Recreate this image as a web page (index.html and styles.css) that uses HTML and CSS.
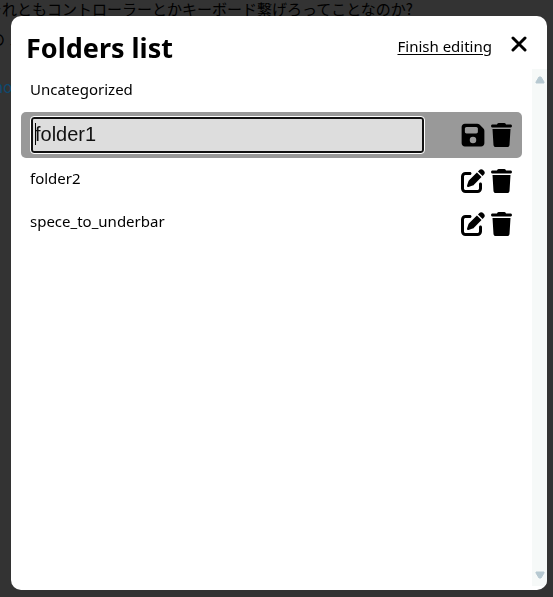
FILE: index.html
```html
<!DOCTYPE html>
<html lang="en">
<head>
<meta charset="utf-8">
<title>Folders list</title>
<link rel="stylesheet" href="styles.css">
</head>
<body>
<svg class="sprite" aria-hidden="true">
  <symbol id="trash" viewBox="0 0 448 512"><path d="M135.2 17.7L128 32H32C14.3 32 0 46.3 0 64S14.3 96 32 96H416c17.7 0 32-14.3 32-32s-14.3-32-32-32H320l-7.2-14.3C307.4 6.8 296.3 0 284.2 0H163.8c-12.1 0-23.2 6.8-28.6 17.7zM416 128H32L53.2 467c1.6 25.3 22.6 45 47.9 45H346.9c25.3 0 46.3-19.7 47.9-45L416 128z"/></symbol>
  <symbol id="edit" viewBox="0 0 512 512"><path d="M471.6 21.7c-21.9-21.9-57.3-21.9-79.2 0L362.3 51.7l97.9 97.9 30.1-30.1c21.9-21.9 21.9-57.3 0-79.2L471.6 21.7zm-299.2 220c-6.1 6.1-10.8 13.6-13.5 21.9l-29.6 88.8c-2.9 8.6-.6 18.1 5.8 24.6s15.9 8.7 24.6 5.8l88.8-29.6c8.2-2.7 15.7-7.4 21.9-13.5L437.7 172.3 339.7 74.3 172.4 241.7zM96 64C43 64 0 107 0 160V416c0 53 43 96 96 96H352c53 0 96-43 96-96V320c0-17.7-14.3-32-32-32s-32 14.3-32 32v96c0 17.7-14.3 32-32 32H96c-17.7 0-32-14.3-32-32V160c0-17.7 14.3-32 32-32h96c17.7 0 32-14.3 32-32s-14.3-32-32-32H96z"/></symbol>
  <symbol id="save" viewBox="0 0 448 512"><path d="M64 32C28.7 32 0 60.7 0 96V416c0 35.3 28.7 64 64 64H384c35.3 0 64-28.7 64-64V173.3c0-17-6.7-33.3-18.7-45.3L352 50.7C340 38.7 323.7 32 306.7 32H64zm0 96c0-17.7 14.3-32 32-32H288c17.7 0 32 14.3 32 32v64c0 17.7-14.3 32-32 32H96c-17.7 0-32-14.3-32-32V128zM224 288a64 64 0 1 1 0 128 64 64 0 1 1 0-128z"/></symbol>
</svg>

<main class="page">
  <p>それともコントローラーとかキーボード繋げろってことなのか?</p>
  <p>の ノ</p>
  <a href="#">no</a>
</main>

<section class="modal" role="dialog" aria-labelledby="title">
  <header class="modal-header">
    <h1 id="title">Folders list</h1>
    <a class="finish" href="#">Finish editing</a>
    <button class="icon-button" type="button" aria-label="Close">
      <svg class="close-icon" viewBox="0 0 16 16"><path d="M2 2l12 12M14 2L2 14"/></svg>
    </button>
  </header>
  <div class="modal-body">
    <ul class="folders">
      <li class="folder"><span class="name">Uncategorized</span></li>
      <li class="folder active">
        <div class="field">
          <input type="text" value="folder1" aria-label="Folder name">
          <span class="caret"></span>
        </div>
        <div class="actions">
          <button class="icon-button" type="button" aria-label="Save"><svg class="icon save"><use href="#save"/></svg></button>
          <button class="icon-button" type="button" aria-label="Delete"><svg class="icon trash"><use href="#trash"/></svg></button>
        </div>
      </li>
      <li class="folder">
        <span class="name">folder2</span>
        <div class="actions">
          <button class="icon-button" type="button" aria-label="Edit"><svg class="icon"><use href="#edit"/></svg></button>
          <button class="icon-button" type="button" aria-label="Delete"><svg class="icon trash"><use href="#trash"/></svg></button>
        </div>
      </li>
      <li class="folder">
        <span class="name">spece_to_underbar</span>
        <div class="actions">
          <button class="icon-button" type="button" aria-label="Edit"><svg class="icon"><use href="#edit"/></svg></button>
          <button class="icon-button" type="button" aria-label="Delete"><svg class="icon trash"><use href="#trash"/></svg></button>
        </div>
      </li>
    </ul>
    <div class="scrollbar" aria-hidden="true">
      <svg viewBox="0 0 10 8"><path d="M4 1h2l3 5v1H1V6z"/></svg>
      <svg viewBox="0 0 10 8"><path d="M1 1h8v1L6 7H4L1 2z"/></svg>
    </div>
  </div>
</section>
</body>
</html>
```
FILE: styles.css
```css
* {
  box-sizing: border-box;
}

body {
  margin: 0;
  height: 100vh;
  overflow: hidden;
  background: #333;
  color: #000;
  font: 15px/24px "Noto Sans", "Noto Sans CJK JP", sans-serif;
}

.sprite {
  display: none;
}

.page {
  margin-left: -13px;
  line-height: 30px;
  white-space: nowrap;
  color: #000;
  font-family: "Noto Sans CJK JP", sans-serif;
}

.page p {
  margin: 0;
}

.page p:first-child {
  margin-top: -6px;
}

.page p + p {
  margin-left: 3px;
}

.page a {
  display: block;
  margin: 18px 0 0 7px;
  color: #0d4a70;
  text-decoration: none;
}

.modal {
  position: fixed;
  inset: 16px 6px 7px 11px;
  display: flex;
  flex-direction: column;
  padding-bottom: 4px;
  border-radius: 10px;
  background: #fff;
  overflow: hidden;
}

.modal-header {
  display: flex;
  align-items: center;
  height: 53px;
  padding: 0 20px 0 15px;
}

h1 {
  flex: 1;
  margin: 10px 0 0;
  font-size: 27px;
  line-height: 40px;
}

.finish {
  margin: 6px 19px 0 0;
  color: #000;
  text-underline-offset: 2px;
}

.icon-button {
  display: flex;
  padding: 0;
  border: 0;
  background: none;
}

.close-icon {
  width: 16px;
  height: 16px;
  margin-top: 2px;
  fill: none;
  stroke: #000;
  stroke-width: 3;
  stroke-linecap: round;
}

.modal-body {
  display: flex;
  flex: 1;
}

.folders {
  flex: 1;
  margin: 0;
  padding: 0 10px;
  list-style: none;
}

.folder {
  display: flex;
  align-items: center;
  justify-content: space-between;
  height: 43px;
  padding: 0 10px 0 9px;
  border-radius: 5px;
}

.name {
  padding-bottom: 4px;
}

.folder.active {
  height: 46px;
  background: #999;
}

.field {
  position: relative;
  flex: 1;
  margin: 0 37px 0 1px;
}

.field input {
  display: block;
  width: 100%;
  height: 36px;
  padding: 0 2px 2px;
  border: 2px solid #101010;
  border-radius: 3px;
  outline: 1px solid #fff;
  background: #ddd;
  color: #111;
  font: 20px "Liberation Sans", sans-serif;
}

.caret {
  position: absolute;
  top: 6px;
  left: 4px;
  width: 1px;
  height: 22px;
  background: #000;
}

.actions {
  display: flex;
  align-items: center;
  gap: 6px;
  padding-top: 2px;
}

.folder.active .actions {
  padding-top: 0;
}

.icon {
  width: 24px;
  height: 24px;
}

.icon.trash {
  width: 21px;
}

.icon.save {
  height: 26px;
}

.scrollbar {
  display: flex;
  flex-direction: column;
  align-items: center;
  justify-content: space-between;
  width: 15px;
  padding: 7px 0;
  background: #f6f9f8;
}

.scrollbar svg {
  width: 10px;
  height: 8px;
  fill: #b7c9d1;
  stroke: #b7c9d1;
  stroke-linejoin: round;
}
```
